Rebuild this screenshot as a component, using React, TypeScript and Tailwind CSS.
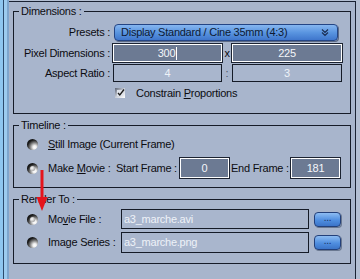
import React from "react";

function Radio({ checked }: { checked?: boolean }) {
  return (
    <span className="relative block w-[11px] h-[11px] shrink-0 rounded-full bg-[radial-gradient(circle_at_70%_75%,#ffffff_0%,#f0f0f0_15%,#7a7a7a_42%,#1a1a1a_65%,#000000_100%)]">
      {checked && (
        <span className="absolute left-[3px] top-[3px] w-[5px] h-[5px] rounded-full bg-[radial-gradient(circle_at_40%_40%,#ffffff_0%,#b8b8b8_60%,#606060_100%)]" />
      )}
    </span>
  );
}

function DarkInput({ value, cursor, w }: { value: string; cursor?: boolean; w: string }) {
  return (
    <div className={`${w} h-full border border-white bg-[#6c7a93] shadow-[0_0_0_1px_#1b2230] flex items-center justify-center text-[#f4f6fa]`}>
      <span>{value}</span>
      {cursor && <span className="ml-[1px] w-[1px] h-[13px] bg-white" />}
    </div>
  );
}

function FlatInput({ value, w, left }: { value: string; w: string; left?: boolean }) {
  return (
    <div
      className={`${w} h-full border border-[#151b27] bg-[#a9b6cd] flex items-center ${left ? "justify-start pl-[2px]" : "justify-center"} text-[#eef2f8]`}
    >
      {value}
    </div>
  );
}

function DotsButton() {
  return (
    <div className="w-[27px] h-[15px] rounded-[4px] border border-[#23407a] bg-[linear-gradient(#8dbcf2,#4f8ee0_55%,#3b74c8)] flex items-center justify-center shadow-[1px_1px_0_#6a7890]">
      <span className="text-[#1d3360] text-[10px] leading-none -mt-[3px]">...</span>
    </div>
  );
}

export default function App() {
  return (
    <div className="relative w-[360px] h-[279px] flex bg-[#b3bfd3] overflow-hidden font-['Liberation_Sans',Arial,sans-serif] text-[11px] tracking-[-0.25px] text-[#0c0c10] leading-[13px]">
      {/* left ruler strip */}
      <div className="flex w-[9px] shrink-0 h-full">
        <div className="w-[3px] bg-[#8ec6f0]" />
        <div className="w-[1px] bg-[#2c4a6c]" />
        <div className="w-[3px] bg-[#9ccbef]" />
        <div className="w-[2px] bg-[#7ea5cd]" />
      </div>

      {/* main panel */}
      <div className="w-[347px] shrink-0 mt-[1px] border-t border-r border-[#1a2233] bg-[#a8b5cc] px-[4px] pt-[3px] flex flex-col">
        {/* Dimensions */}
        <fieldset className="border border-[#161c28] h-[109px] px-0 pb-0">
          <legend className="ml-[5px] px-[2px]">Dimensions :</legend>
          <div className="flex flex-col pt-[6px]">
            <div className="flex items-center h-[17px]">
              <div className="w-[96px] text-right">Presets :</div>
              <div className="ml-[4px] w-[224px] h-[17px] rounded-[4px] border border-[#244585] bg-[linear-gradient(#86b6f0,#5a95e0_50%,#3f76cc)] flex items-center pl-[6px] pr-[6px] shadow-[1px_1px_0_#5d6b86] text-[#0e1a33]">
                <span className="flex-1">Display Standard / Cine 35mm (4:3)</span>
                <svg width="8" height="9" viewBox="0 0 8 9" className="mr-[2px]">
                  <path d="M1 1.5 L4 4.5 L7 1.5 M1 4.5 L4 7.5 L7 4.5" stroke="#1d2f55" strokeWidth="1.2" fill="none" />
                </svg>
              </div>
            </div>
            <div className="flex items-center h-[18px] mt-[3px]">
              <div className="w-[96px] text-right">Pixel Dimensions :</div>
              <div className="ml-[3px] h-full flex items-center">
                <DarkInput value="300" cursor w="w-[109px]" />
                <div className="w-[10px] text-center">x</div>
                <DarkInput value="225" w="w-[110px]" />
              </div>
            </div>
            <div className="flex items-center h-[18px] mt-[2px]">
              <div className="w-[96px] text-right">Aspect Ratio :</div>
              <div className="ml-[3px] h-full flex items-center">
                <FlatInput value="4" w="w-[109px]" />
                <div className="w-[10px] text-center text-[#4a5568]">:</div>
                <FlatInput value="3" w="w-[110px]" />
              </div>
            </div>
            <div className="flex items-center h-[14px] mt-[4px] pl-[101px]">
              <svg width="10" height="10" viewBox="0 0 10 10">
                <defs>
                  <linearGradient id="cb" x1="0" y1="0" x2="1" y2="1">
                    <stop offset="0" stopColor="#5a6272" />
                    <stop offset="0.5" stopColor="#c9ced8" />
                    <stop offset="1" stopColor="#ffffff" />
                  </linearGradient>
                </defs>
                <rect x="0" y="0" width="10" height="10" fill="url(#cb)" />
                <rect x="2" y="2" width="6" height="6" fill="#dfe3ea" />
                <path d="M3 5 L4.8 7 L9 1.5" stroke="#1a1a1a" strokeWidth="1.3" fill="none" />
              </svg>
              <span className="ml-[11px]">
                Constrain <span className="underline">P</span>roportions
              </span>
            </div>
          </div>
        </fieldset>

        {/* Timeline */}
        <fieldset className="border border-[#161c28] h-[69px] mt-[5px] px-0 pb-0">
          <legend className="ml-[5px] px-[2px]">Timeline :</legend>
          <div className="flex flex-col pl-[13px] pt-[2px]">
            <div className="flex items-center h-[20px]">
              <Radio />
              <span className="ml-[10px]">
                <span className="underline">S</span>till Image (Current Frame)
              </span>
            </div>
            <div className="flex items-center h-[20px] mt-[4px]">
              <Radio checked />
              <span className="ml-[10px] w-[68px]">
                Make <span className="underline">M</span>ovie :
              </span>
              <span className="w-[64px]">Start Frame :</span>
              <div className="h-full">
                <DarkInput value="0" w="w-[49px]" />
              </div>
              <span className="ml-[2px] w-[60px]">End Frame :</span>
              <div className="h-full">
                <DarkInput value="181" w="w-[49px]" />
              </div>
            </div>
          </div>
        </fieldset>

        {/* Render To */}
        <fieldset className="border border-[#161c28] h-[71px] mt-[5px] px-0 pb-0">
          <legend className="ml-[5px] px-[2px]">Render To :</legend>
          <div className="flex flex-col pl-[13px] pt-[3px]">
            <div className="flex items-center h-[20px]">
              <Radio checked />
              <span className="ml-[10px] w-[73px]">
                Mo<span className="underline">v</span>ie File :
              </span>
              <div className="h-full">
                <FlatInput value="a3_marche.avi" w="w-[188px]" left />
              </div>
              <div className="ml-[5px]">
                <DotsButton />
              </div>
            </div>
            <div className="flex items-center h-[21px] mt-[3px]">
              <Radio />
              <span className="ml-[10px] w-[73px]">
                Ima<span className="underline">g</span>e Series :
              </span>
              <div className="h-full">
                <FlatInput value="a3_marche.png" w="w-[188px]" left />
              </div>
              <div className="ml-[5px]">
                <DotsButton />
              </div>
            </div>
          </div>
        </fieldset>
      </div>

      {/* red annotation arrow */}
      <svg className="absolute left-0 top-0 pointer-events-none" width="360" height="279">
        <line x1="42" y1="170" x2="42" y2="199" stroke="#e4141c" strokeWidth="3" />
        <polygon points="36.5,197 47.5,197 42,211" fill="#e4141c" />
      </svg>
    </div>
  );
}
